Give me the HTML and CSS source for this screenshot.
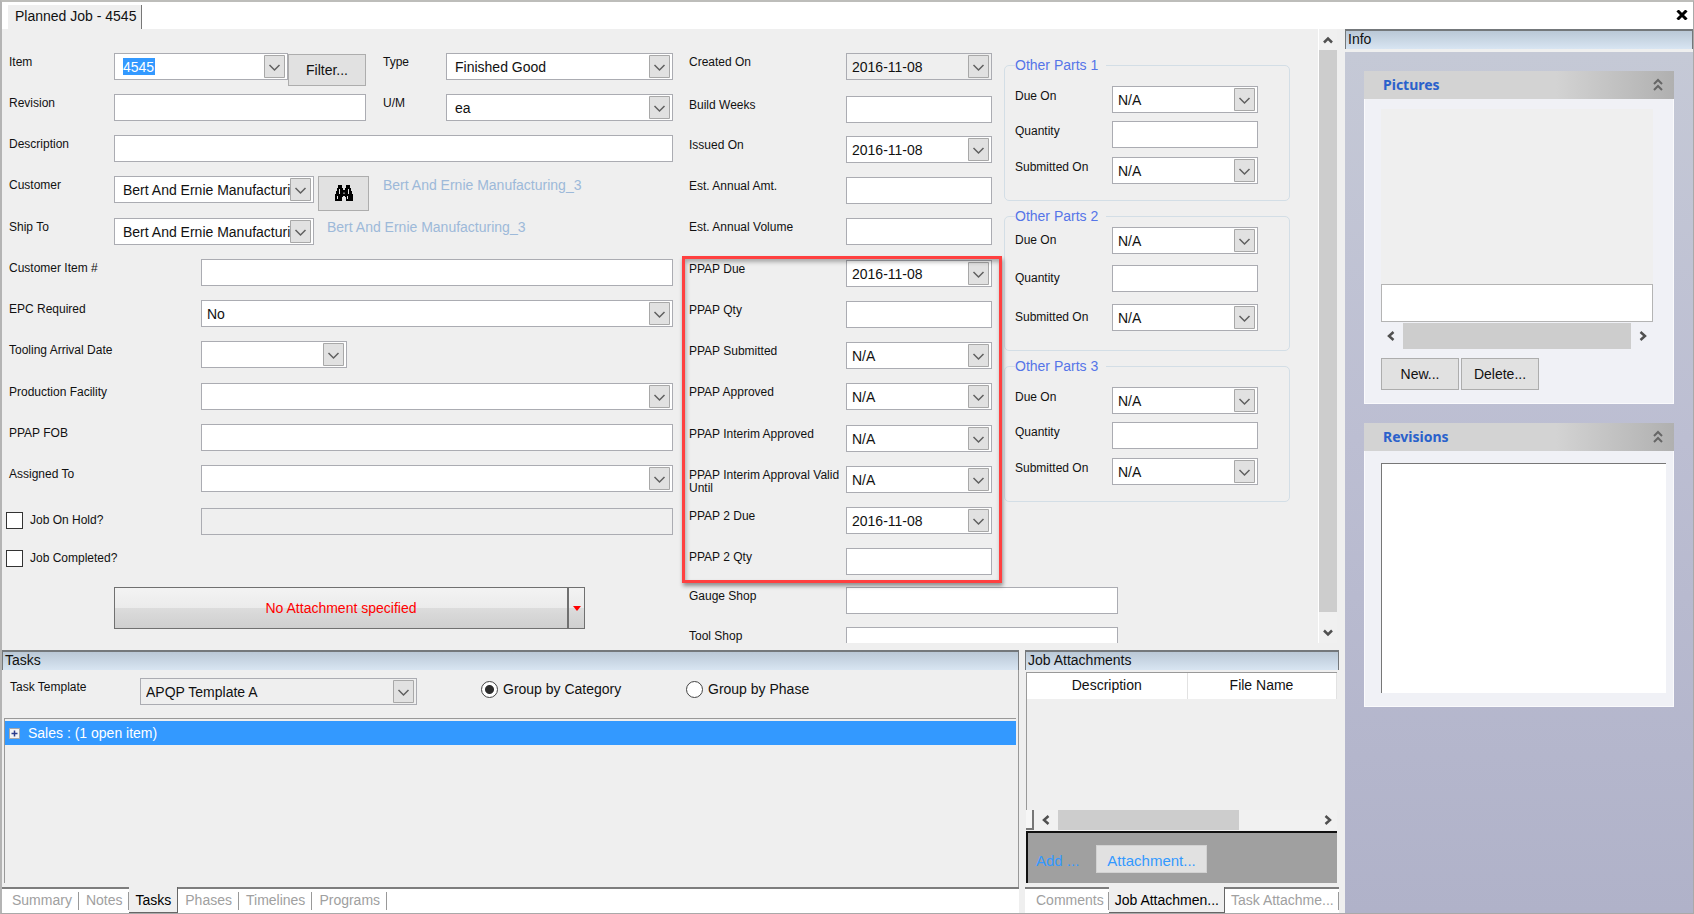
FILE: index.html
```html
<!DOCTYPE html>
<html lang="en">
<head>
<meta charset="utf-8">
<title>Planned Job - 4545</title>
<link rel="stylesheet" href="styles.css">
</head>
<body>
<div class="window">
  <header class="titlebar">
    <h1 class="doc-tab">Planned Job - 4545</h1>
    <button class="close" aria-label="Close"><svg width="12" height="10" viewBox="0 0 12 10"><path d="M1.500 0.500 10.500 9.500M10.500 0.500 1.500 9.500" stroke="#000" stroke-width="3"/></svg></button>
  </header>
  <div class="workspace">
    <main class="main">
      <div class="upper">
        <form class="form">
          <div class="left">
            <div class="row">
              <label class="lbl short" for="item">Item</label>
              <span class="combo"><input id="item" class="combo-input" value="4545"><button type="button" class="chev" aria-label="Open item list"></button></span>
              <button type="button" class="btn filter">Filter...</button>
              <label class="lbl side" for="type">Type</label>
              <select id="type" class="fld roomy grow"><option>Finished Good</option></select>
            </div>
            <div class="row">
              <label class="lbl short" for="rev">Revision</label>
              <input id="rev" class="fld rev">
              <label class="lbl side" for="um">U/M</label>
              <select id="um" class="fld roomy grow"><option>ea</option></select>
            </div>
            <div class="row">
              <label class="lbl short" for="desc">Description</label>
              <input id="desc" class="fld grow">
            </div>
            <div class="row">
              <label class="lbl short" for="cust">Customer</label>
              <select id="cust" class="fld roomy party"><option>Bert And Ernie Manufacturing_3</option></select>
              <button type="button" class="btn find" aria-label="Find customer"><svg width="20" height="18" viewBox="0 0 20 18"><path d="M4 0h4v3h1v2h2V3h1V0h4v3h1v3h1v3h1v7h-7v-4h-1v-1H9v1H8v4H1V9h1V6h1V3h1z" fill="#000"/><path d="M5.500 4v5M3.500 11v3M14.500 4v5M13.500 11v3M10 7.500v1.500" stroke="#e1e1e1" stroke-width="1"/></svg></button>
              <span class="hint">Bert And Ernie Manufacturing_3</span>
            </div>
            <div class="row">
              <label class="lbl short" for="ship">Ship To</label>
              <select id="ship" class="fld roomy party"><option>Bert And Ernie Manufacturing_3</option></select>
              <span class="hint near">Bert And Ernie Manufacturing_3</span>
            </div>
            <div class="row"><label class="lbl long" for="citem">Customer Item #</label><input id="citem" class="fld grow"></div>
            <div class="row"><label class="lbl long" for="epc">EPC Required</label><select id="epc" class="fld grow"><option>No</option></select></div>
            <div class="row"><label class="lbl long" for="tool">Tooling Arrival Date</label><select id="tool" class="fld date"><option></option></select></div>
            <div class="row"><label class="lbl long" for="fac">Production Facility</label><select id="fac" class="fld grow"><option></option></select></div>
            <div class="row"><label class="lbl long" for="fob">PPAP FOB</label><input id="fob" class="fld grow"></div>
            <div class="row"><label class="lbl long" for="asg">Assigned To</label><select id="asg" class="fld grow"><option></option></select></div>
            <div class="row">
              <label class="check long"><input type="checkbox" class="box">Job On Hold?</label>
              <input class="fld grow" aria-label="Hold reason" disabled>
            </div>
            <div class="row"><label class="check"><input type="checkbox" class="box">Job Completed?</label></div>
            <div class="attach">
              <button type="button" class="attach-main">No Attachment specified</button>
              <button type="button" class="attach-more" aria-label="Attachment options"><svg width="8" height="5" viewBox="0 0 8 5"><path d="M0 0h8L4 5z" fill="#f00"/></svg></button>
            </div>
          </div>

          <div class="right">
            <label class="lbl" for="created">Created On</label><select id="created" class="fld" disabled><option>2016-11-08</option></select>
            <label class="lbl" for="weeks">Build Weeks</label><input id="weeks" class="fld">
            <label class="lbl" for="issued">Issued On</label><select id="issued" class="fld"><option>2016-11-08</option></select>
            <label class="lbl" for="amt">Est. Annual Amt.</label><input id="amt" class="fld">
            <label class="lbl" for="vol">Est. Annual Volume</label><input id="vol" class="fld">
            <label class="lbl" for="due">PPAP Due</label><select id="due" class="fld"><option>2016-11-08</option></select>
            <label class="lbl" for="qty">PPAP Qty</label><input id="qty" class="fld">
            <label class="lbl" for="sub">PPAP Submitted</label><select id="sub" class="fld"><option>N/A</option></select>
            <label class="lbl" for="app">PPAP Approved</label><select id="app" class="fld"><option>N/A</option></select>
            <label class="lbl" for="iapp">PPAP Interim Approved</label><select id="iapp" class="fld"><option>N/A</option></select>
            <label class="lbl" for="valid">PPAP Interim Approval Valid Until</label><select id="valid" class="fld"><option>N/A</option></select>
            <label class="lbl" for="due2">PPAP 2 Due</label><select id="due2" class="fld"><option>2016-11-08</option></select>
            <label class="lbl" for="qty2">PPAP 2 Qty</label><input id="qty2" class="fld">
            <label class="lbl" for="gauge">Gauge Shop</label><input id="gauge" class="fld shop">
            <label class="lbl" for="tshop">Tool Shop</label><input id="tshop" class="fld shop">
            <div class="highlight"></div>
            <div class="parts-col">
              <fieldset class="parts">
                <legend>Other Parts 1</legend>
                <label class="lbl" for="p1d">Due On</label><select id="p1d" class="fld"><option>N/A</option></select>
                <label class="lbl" for="p1q">Quantity</label><input id="p1q" class="fld">
                <label class="lbl" for="p1s">Submitted On</label><select id="p1s" class="fld"><option>N/A</option></select>
              </fieldset>
              <fieldset class="parts spread">
                <legend>Other Parts 2</legend>
                <label class="lbl" for="p2d">Due On</label><select id="p2d" class="fld"><option>N/A</option></select>
                <label class="lbl" for="p2q">Quantity</label><input id="p2q" class="fld">
                <label class="lbl" for="p2s">Submitted On</label><select id="p2s" class="fld"><option>N/A</option></select>
              </fieldset>
              <fieldset class="parts">
                <legend>Other Parts 3</legend>
                <label class="lbl" for="p3d">Due On</label><select id="p3d" class="fld"><option>N/A</option></select>
                <label class="lbl" for="p3q">Quantity</label><input id="p3q" class="fld">
                <label class="lbl" for="p3s">Submitted On</label><select id="p3s" class="fld"><option>N/A</option></select>
              </fieldset>
            </div>
          </div>
        </form>
        <div class="vscroll">
          <svg class="arrow" width="10" height="8" viewBox="0 0 10 8"><path d="M1 6.500 5 2.500 9 6.500" fill="none" stroke="#505050" stroke-width="2.500"/></svg>
          <div class="thumb"></div>
          <svg class="arrow" width="10" height="8" viewBox="0 0 10 8"><path d="M1 1.500 5 5.500 9 1.500" fill="none" stroke="#505050" stroke-width="2.500"/></svg>
        </div>
      </div>

      <div class="lower">
        <section class="pane tasks">
          <h2 class="bar">Tasks</h2>
          <div class="pane-body">
            <div class="task-tools">
              <label class="lbl" for="tpl">Task Template</label>
              <select id="tpl" class="fld" disabled><option>APQP Template A</option></select>
              <label class="radio"><input type="radio" name="grp" checked>Group by Category</label>
              <label class="radio"><input type="radio" name="grp">Group by Phase</label>
            </div>
            <div class="tree">
              <div class="tree-row"><svg width="11" height="11" viewBox="0 0 11 11"><path d="M.5.5h10v10H.5z" fill="#f4f4f4" stroke="#a8a8a8"/><path d="M2.500 5.500h6M5.500 2.500v6" stroke="#2b3c8c" stroke-width="1.500"/></svg>Sales : (1 open item)</div>
            </div>
          </div>
          <nav class="tabs">
            <a href="#summary">Summary</a><a href="#notes">Notes</a><a href="#tasks" class="on">Tasks</a><a href="#phases">Phases</a><a href="#timelines">Timelines</a><a href="#programs">Programs</a>
          </nav>
        </section>
        <section class="pane files">
          <h2 class="bar">Job Attachments</h2>
          <div class="pane-body">
            <div class="grid-area">
              <table class="grid"><thead><tr><th class="c-desc">Description</th><th class="c-file">File Name</th><th></th></tr></thead></table>
            </div>
            <div class="hscroll small">
              <span class="splitter"></span>
              <svg class="arrow" width="8" height="10" viewBox="0 0 8 10"><path d="M6.500 1 2 5 6.500 9" fill="none" stroke="#505050" stroke-width="2.500"/></svg>
              <div class="track"><div class="thumb"></div></div>
              <svg class="arrow" width="8" height="10" viewBox="0 0 8 10"><path d="M1.500 1 6 5 1.500 9" fill="none" stroke="#505050" stroke-width="2.500"/></svg>
            </div>
            <div class="addbar"><span>Add ...</span><button type="button" class="add-btn">Attachment...</button></div>
          </div>
          <nav class="tabs">
            <a href="#comments">Comments</a><a href="#job-files" class="on">Job Attachmen...</a><a href="#task-files">Task Attachme...</a>
          </nav>
        </section>
      </div>
    </main>

    <aside class="info">
      <h2 class="bar">Info</h2>
      <div class="cards">
        <section class="card">
          <h3>Pictures<svg width="10" height="14" viewBox="0 0 10 14"><path d="M1 6 5 2 9 6M1 12 5 8 9 12" fill="none" stroke="#666" stroke-width="2"/></svg></h3>
          <div class="card-body pics">
            <div class="preview"></div>
            <input class="caption" aria-label="Picture caption">
            <div class="hscroll">
              <svg class="arrow" width="8" height="10" viewBox="0 0 8 10"><path d="M6.500 1 2 5 6.500 9" fill="none" stroke="#505050" stroke-width="2.500"/></svg>
              <div class="track"><div class="thumb"></div></div>
              <svg class="arrow" width="8" height="10" viewBox="0 0 8 10"><path d="M1.500 1 6 5 1.500 9" fill="none" stroke="#505050" stroke-width="2.500"/></svg>
            </div>
            <div class="btns"><button type="button" class="btn">New...</button><button type="button" class="btn">Delete...</button></div>
          </div>
        </section>
        <section class="card">
          <h3>Revisions<svg width="10" height="14" viewBox="0 0 10 14"><path d="M1 6 5 2 9 6M1 12 5 8 9 12" fill="none" stroke="#666" stroke-width="2"/></svg></h3>
          <div class="card-body revs"><div class="listbox"></div></div>
        </section>
      </div>
    </aside>
  </div>
</div>
</body>
</html>
```
FILE: styles.css
```css
* { box-sizing: border-box; }

body {
  margin: 0;
  background: #efefef;
  color: #111;
  font: 14px/18px "Liberation Sans", Arial, sans-serif;
}

h1, h2, h3 { margin: 0; font-size: 14px; font-weight: normal; }
button, input, select { margin: 0; font: inherit; color: inherit; border-radius: 0; }

.window {
  display: flex;
  flex-direction: column;
  height: 100vh;
  border: 1px solid #a9a9a9;
  border-width: 2px 1px 1px 2px;
  border-top-color: #bdbdba;
  border-left-color: #b4b4b4;
}

/* title strip */
.titlebar {
  display: flex;
  justify-content: space-between;
  flex: none;
  height: 27px;
  background: #fff;
}
.doc-tab {
  margin: 3px 0 0 6px;
  padding: 2px 5px 0 7px;
  background: #efefef;
  border-right: 1px solid #777;
}
.close { padding: 0 0 2px; width: 22px; background: none; border: 0; line-height: 0; }

.workspace { display: flex; flex: 1; min-height: 0; }
.main { display: flex; flex-direction: column; flex: 1; min-width: 0; }

.bar {
  height: 20px;
  padding-left: 2px;
  line-height: 16px;
  background: linear-gradient(#bac8d6, #d8e5f2);
  border: 2px solid #74787b;
  border-width: 2px 1px 0;
}

/* form */
.upper { display: flex; flex: 1; min-height: 0; margin-bottom: 7px; }
.form {
  display: grid;
  grid-template-columns: minmax(0, 1fr) auto;
  gap: 16px;
  flex: 1;
  padding: 24px 28px 0 4px;
  overflow: hidden;
}
.left {
  display: grid;
  align-content: start;
  grid-template-rows: repeat(2, 41px 41px 41px 42px) 41px 41px 43px 42px 37px 42px;
}
.row { display: flex; align-items: flex-start; }
.lbl { flex: none; padding-top: 3px; font-size: 12px; line-height: 13px; }
.left .lbl { padding-left: 3px; }
.lbl.short { width: 108px; }
.long { width: 195px; flex: none; }
.left .side { width: 80px; padding-left: 17px; }
.grow { flex: 1; min-width: 0; }

.fld {
  height: 27px;
  padding: 0 5px;
  background: #fff;
  border: 1px solid #abacb2;
}
select.fld, .chev {
  appearance: none;
  background: #fff url("data:image/svg+xml,%3Csvg xmlns='http://www.w3.org/2000/svg' width='21' height='23'%3E%3Cpath d='M.5.5h20v22H.5z' fill='%23e1e1e1' stroke='%23a8a8a8'/%3E%3Cpath d='M5.500 10l5 5 5-5' fill='none' stroke='%23606060' stroke-width='1.500'/%3E%3C/svg%3E") no-repeat right 2px center;
}
select.fld { padding-right: 23px; }
.fld:disabled { background-color: #efefef; color: #111; opacity: 1; }
select.roomy { padding-left: 8px; }
.rev { width: 252px; }
.party { width: 200px; }
.date { width: 146px; }

.combo {
  display: flex;
  align-items: center;
  justify-content: space-between;
  width: 174px;
  height: 27px;
  padding: 0 2px 0 8px;
  background: #fff;
  border: 1px solid #abacb2;
}
.combo-input { width: 32px; height: 17px; padding: 0; border: 0; background: #39f; color: #fff; }
.chev { width: 21px; height: 23px; padding: 0; border: 0; background-position: center; }

.btn { padding: 0; height: 32px; width: 78px; background: #e1e1e1; border: 1px solid #adadad; }
.filter { align-self: flex-start; margin-top: 1px; }
.btn.find { width: 51px; height: 35px; margin-left: 4px; line-height: 0; }
.hint { margin-left: 14px; color: #9db9d9; white-space: nowrap; }
.near { margin-left: 13px; }

.check { display: flex; align-items: center; gap: 7px; font-size: 12px; line-height: 17px; }
.row .check.long { padding-top: 4px; }
.box {
  appearance: none;
  width: 17px;
  height: 17px;
  background: #fff;
  border: 1px solid #333;
}

.attach { display: flex; width: 471px; margin-left: 108px; }
.attach-main, .attach-more {
  padding: 0;
  color: #f00;
  background: linear-gradient(#f3f3f3, #ebebeb 50%, #dcdcdc 50%, #cfcfcf);
  border: 1px solid #707070;
}
.attach-main { flex: 1; border-right-width: 2px; }
.attach-more { width: 16px; border-left: 0; line-height: 0; }

.right {
  position: relative;
  display: grid;
  align-content: start;
  align-items: start;
  grid-template-columns: 157px 146px 298px;
  grid-template-rows: 43px 40px 41px 41px repeat(2, 42px 41px 41px 41px) 39px 40px 27px;
}
.right > .lbl { grid-column: 1; padding-right: 4px; }
.right > .fld { grid-column: 2; width: 100%; }
.right > .shop { grid-column: 2 / 4; width: 272px; }

/* red frame drawn over the PPAP rows */
.highlight {
  position: absolute;
  grid-area: 6 / 1 / 14 / 3;
  inset: -4px -10px 4px -7px;
  border: 3px solid #ff4040;
  box-shadow: 1px 3px 4px rgba(0, 0, 0, .4), inset 1px 3px 4px rgba(0, 0, 0, .3);
  pointer-events: none;
}

.parts-col {
  grid-area: 1 / 3 / 14 / 4;
  display: grid;
  align-content: start;
  gap: 6px;
  margin: 3px 0 0 12px;
}
.parts {
  display: grid;
  grid-template-columns: 97px 146px;
  grid-template-rows: 35px 36px 27px;
  align-items: start;
  min-width: 0;
  margin: 0;
  padding: 12px 0 16px 10px;
  border: 1px solid #d3dee6;
  border-radius: 5px;
}
.parts legend { padding: 0 8px 0 0; color: #5575e8; }
.parts .fld { width: 100%; }
.parts.spread { grid-template-rows: 38px 39px 27px; padding: 2px 0 19px 10px; }
.parts .lbl { padding-top: 4px; }
.parts.spread .lbl { padding-top: 7px; }

/* scrollbars */
.vscroll {
  display: flex;
  flex-direction: column;
  align-items: center;
  width: 19px;
  margin-right: 8px;
  background: #f0f0f0;
  border-left: 1px solid #fff;
}
.arrow { flex: none; }
.vscroll .arrow { margin: 7px 0 6px; }
.vscroll .thumb { flex: 1; width: 100%; background: #cdcdcd; margin-bottom: 10px; }
.hscroll { display: flex; align-items: center; gap: 8px; height: 26px; padding: 0 6px; }
.track { flex: 1; align-self: stretch; }
.hscroll .thumb { height: 100%; background: #cdcdcd; }

/* lower panes */
.lower { display: flex; gap: 6px; flex: none; height: 263px; margin-right: 6px; }
.pane { display: flex; flex-direction: column; }
.pane-body { display: flex; flex-direction: column; flex: 1; min-height: 0; }
.tasks { flex: 1; min-width: 0; }
.files { width: 314px; }
.tasks .pane-body { padding: 8px 2px 4px; border-right: 1px solid #999; }
.task-tools { display: flex; align-items: flex-start; padding-left: 6px; height: 40px; }
.task-tools .lbl { width: 130px; }
.task-tools .fld { width: 277px; }
.radio { display: flex; align-items: center; gap: 5px; width: 205px; height: 22px; }
.task-tools .fld + .radio { margin-left: 64px; }
.radio input {
  appearance: none;
  width: 17px;
  height: 17px;
  border: 1px solid #444;
  border-radius: 50%;
  background: #fff;
}
.radio input:checked { background: radial-gradient(circle, #2d2d2d 4px, #fff 5px); }
.tree { flex: 1; border: 1px solid #999; border-width: 1px 0 0 1px; padding-top: 2px; }
.tree-row {
  display: flex;
  align-items: center;
  gap: 8px;
  height: 24px;
  padding-left: 4px;
  background: #39f;
  color: #fff;
}

.tabs {
  display: flex;
  flex: none;
  height: 26px;
  background: #fff;
  border-top: 2px solid #7d7d7d;
  padding-left: 3px;
}
.tabs a {
  position: relative;
  padding: 2px 7px 4px 7px;
  color: #a0a0a0;
  text-decoration: none;
  white-space: nowrap;
}
.tabs a:not(.on)::after {
  content: "";
  position: absolute;
  right: 0;
  top: 3px;
  bottom: 3px;
  border-right: 1px solid #999;
}
.tabs .on {
  margin-top: -2px;
  padding: 4px 6px 2px;
  background: #efefef;
  color: #000;
  border: solid #666;
  border-width: 0 1px 1px 0;
}

.files .pane-body { padding: 2px 2px 4px 1px; }
.grid-area { flex: 1; border: solid #999; border-width: 1px 0 0 1px; }
.grid { width: 100%; border-collapse: collapse; table-layout: fixed; background: #fff; }
.grid th { height: 26px; padding: 0 0 2px; font-weight: normal; border-right: 1px solid #e2e2e2; }
.c-desc { width: 160px; }
.c-file { width: 149px; }
.hscroll.small { height: 20px; padding: 0 5px 0 0; margin-bottom: 1px; background: #f1f1f1; }
.splitter { width: 8px; height: 20px; border: solid #777; border-width: 0 2px 2px 0; background: #f6f6f6; }
.small .thumb { width: 70%; }
.addbar {
  display: flex;
  align-items: center;
  gap: 17px;
  height: 52px;
  padding: 2px 0 0 8px;
  background: #a0a0a0;
  border: solid #111;
  border-width: 2px 0 0 2px;
  color: #39f;
  font-size: 15px;
}
.addbar span { padding-top: 4px; }
.add-btn { height: 28px; padding: 3px 10px 0; border: 1px solid #d2d2d2; background: #e1e1e1; }
.files .tabs { padding-left: 4px; }
.files .tabs a { padding-left: 6px; padding-right: 5px; }
.files .tabs a:first-child { padding-left: 7px; }

/* info column */
.info { display: flex; flex-direction: column; width: 348px; flex: none; }
.cards {
  flex: 1;
  display: flex;
  flex-direction: column;
  gap: 19px;
  margin-top: 3px;
  padding: 19px 19px 0 19px;
  background: linear-gradient(#c5c9d6, #bcbed2 45%, #b0b2c9);
}
.card h3 {
  display: flex;
  align-items: center;
  justify-content: space-between;
  height: 28px;
  padding: 0 11px 0 19px;
  background: linear-gradient(90deg, #d3d3d3 62%, #b0b0b0);
  color: #2a61cb;
  font: bold 14px/28px "Noto Sans", sans-serif;
}
.card-body { background: #f0f1f6; border: 1px solid #fafafc; border-top: 0; }
.pics { padding: 10px 20px 13px 16px; }
.preview { height: 175px; background: #efefef; }
.caption { display: block; width: 100%; height: 38px; border: 1px solid #b4b4b4; background: #fff; }
.pics .hscroll { margin-top: 1px; }
.btns { display: flex; gap: 2px; margin-top: 9px; }
.revs { padding: 12px 7px 13px 16px; }
.listbox { height: 230px; background: #fff; border: solid #777; border-width: 1px 0 0 1px; }
```
